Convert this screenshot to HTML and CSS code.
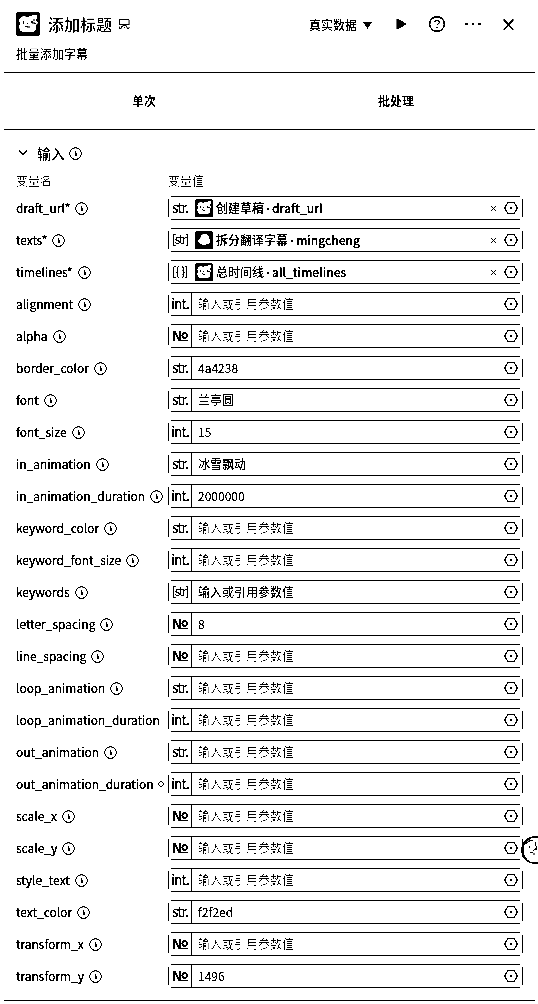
FILE: index.html
```html
<!DOCTYPE html>
<html lang="zh-CN">
<head>
<meta charset="utf-8">
<title>添加标题</title>
<link rel="stylesheet" href="styles.css">
</head>
<body>
<svg class="defs" width="0" height="0">
  <symbol id="info" viewBox="0 0 13 13"><circle cx="6.5" cy="6.5" r="5.8" fill="none" stroke="#000" stroke-width="1.1"/><path d="M6 4h1v5H6zM7 6h1v3H7z" fill="#000"/></symbol>
  <symbol id="hex" viewBox="0 0 14 14"><path d="M3.8 1.5h6.4L13.3 7l-3.1 5.500H3.800L.7 7z" fill="none" stroke="#000" stroke-width="1.200" stroke-linejoin="round"/><rect x="6" y="6" width="2" height="2"/></symbol>
  <symbol id="clear" viewBox="0 0 7 7"><path d="M.5.5l6 6M6.500.500l-6 6" stroke="#000" stroke-width=".9"/></symbol>
  <symbol id="cat" viewBox="0 0 24 24"><rect width="24" height="24" rx="2"/><path d="M5 5l3-1 3 1 7-2h3v3l-1 2 2 3-2 2v5l-3 2H8l-4-1-1-5 1-2-1-4z" fill="#fff"/><path d="M7.500 9v3M11.500 11v1M9 14l2 1h3M16 9v2h3l1 1M17 8h2" fill="none" stroke="#000" stroke-width="1.100"/></symbol>
  <symbol id="ghost" viewBox="0 0 24 24"><rect width="24" height="24" rx="2"/><path d="M8 6l3-2h4l4 4v3l2 2-2 4h-3l-2 2h-4l-2-2-3-1-1-3 3-3z" fill="#fff"/></symbol>
</svg>
<div class="panel">
  <header class="header">
    <div class="title-row">
      <svg class="logo"><use href="#cat"/></svg>
      <h1 class="title">添加标题</h1>
      <svg class="badge" viewBox="0 0 11 11"><path d="M.5 6v-5.500h9.500v5.500M1 5.500h9M3.500 6.500h4M.500 7.500v2h2M2.500 9V7.500h1.500l1 1h1l1-1h1v2h2v-2" fill="none" stroke="#000"/></svg>
      <div class="tools">
        <span class="mode">真实数据</span>
        <svg class="caret" viewBox="0 0 9 7"><path d="M0 0h9L4.500 7z"/></svg>
        <svg class="play" viewBox="0 0 11 12"><path d="M.500 0L11 6 .500 12z"/></svg>
        <svg class="help" viewBox="0 0 16 16"><circle cx="8" cy="8" r="7.300" fill="none" stroke="#000" stroke-width="1.400"/><path d="M5.700 6.500q0-2 2.300-2t2.300 2q0 1-2.300 2.300v1M8 11v1.500" fill="none" stroke="#000" stroke-width="1.300"/></svg>
        <svg class="more" viewBox="0 0 16 4"><circle cx="1.600" cy="2" r="1.400"/><circle cx="8" cy="2" r="1.400"/><circle cx="14.400" cy="2" r="1.400"/></svg>
        <svg class="close" viewBox="0 0 11 11"><path d="M.500.500l10 10M10.500.500l-10 10" stroke="#000" stroke-width="1.500"/></svg>
      </div>
    </div>
    <p class="subtitle">批量添加字幕</p>
  </header>
  <nav class="tabs"><span>单次</span><span>批处理</span></nav>
  <main class="inputs">
    <div class="section">
      <svg class="chevron" viewBox="0 0 10 6"><path d="M.800.500L5 4.700 9.200.500" fill="none" stroke="#000" stroke-width="1.700"/></svg>
      <h2>输入</h2><svg class="info"><use href="#info"/></svg>
    </div>
    <div class="columns"><span>变量名</span><span>变量值</span></div>
    <div class="rows">
      <div class="row"><div class="name">draft_url*<svg class="info"><use href="#info"/></svg></div><div class="field ref"><span class="type">str.</span><svg class="avatar"><use href="#cat"/></svg><span class="value">创建草稿<i>·</i><b>draft_url</b></span><svg class="clear"><use href="#clear"/></svg><svg class="hex"><use href="#hex"/></svg></div></div>
      <div class="row"><div class="name">texts*<svg class="info"><use href="#info"/></svg></div><div class="field ref"><span class="type narrow">[str]</span><svg class="avatar"><use href="#ghost"/></svg><span class="value">拆分翻译字幕<i>·</i><b>mingcheng</b></span><svg class="clear"><use href="#clear"/></svg><svg class="hex"><use href="#hex"/></svg></div></div>
      <div class="row"><div class="name">timelines*<svg class="info"><use href="#info"/></svg></div><div class="field ref"><span class="type object">[{ }]</span><svg class="avatar"><use href="#cat"/></svg><span class="value">总时间线<i>·</i><b>all_timelines</b></span><svg class="clear"><use href="#clear"/></svg><svg class="hex"><use href="#hex"/></svg></div></div>
      <div class="row"><div class="name">alignment<svg class="info"><use href="#info"/></svg></div><div class="field"><span class="type">int.</span><span class="value hint">输入或引用参数值</span><svg class="hex"><use href="#hex"/></svg></div></div>
      <div class="row"><div class="name">alpha<svg class="info"><use href="#info"/></svg></div><div class="field"><span class="type num">N<u>o</u></span><span class="value hint">输入或引用参数值</span><svg class="hex"><use href="#hex"/></svg></div></div>
      <div class="row"><div class="name">border_color<svg class="info"><use href="#info"/></svg></div><div class="field"><span class="type">str.</span><span class="value">4a4238</span><svg class="hex"><use href="#hex"/></svg></div></div>
      <div class="row"><div class="name">font<svg class="info"><use href="#info"/></svg></div><div class="field"><span class="type">str.</span><span class="value">兰亭圆</span><svg class="hex"><use href="#hex"/></svg></div></div>
      <div class="row"><div class="name">font_size<svg class="info"><use href="#info"/></svg></div><div class="field"><span class="type">int.</span><span class="value">15</span><svg class="hex"><use href="#hex"/></svg></div></div>
      <div class="row"><div class="name">in_animation<svg class="info"><use href="#info"/></svg></div><div class="field"><span class="type">str.</span><span class="value">冰雪飘动</span><svg class="hex"><use href="#hex"/></svg></div></div>
      <div class="row"><div class="name">in_animation_duration<svg class="info"><use href="#info"/></svg></div><div class="field"><span class="type">int.</span><span class="value">2000000</span><svg class="hex"><use href="#hex"/></svg></div></div>
      <div class="row"><div class="name">keyword_color<svg class="info"><use href="#info"/></svg></div><div class="field"><span class="type">str.</span><span class="value hint">输入或引用参数值</span><svg class="hex"><use href="#hex"/></svg></div></div>
      <div class="row"><div class="name">keyword_font_size<svg class="info"><use href="#info"/></svg></div><div class="field"><span class="type">int.</span><span class="value hint">输入或引用参数值</span><svg class="hex"><use href="#hex"/></svg></div></div>
      <div class="row"><div class="name">keywords<svg class="info"><use href="#info"/></svg></div><div class="field"><span class="type narrow">[str]</span><span class="value">输入或引用参数值</span><svg class="hex"><use href="#hex"/></svg></div></div>
      <div class="row"><div class="name">letter_spacing<svg class="info"><use href="#info"/></svg></div><div class="field"><span class="type num">N<u>o</u></span><span class="value">8</span><svg class="hex"><use href="#hex"/></svg></div></div>
      <div class="row"><div class="name">line_spacing<svg class="info"><use href="#info"/></svg></div><div class="field"><span class="type num">N<u>o</u></span><span class="value hint">输入或引用参数值</span><svg class="hex"><use href="#hex"/></svg></div></div>
      <div class="row"><div class="name">loop_animation<svg class="info"><use href="#info"/></svg></div><div class="field"><span class="type">str.</span><span class="value hint">输入或引用参数值</span><svg class="hex"><use href="#hex"/></svg></div></div>
      <div class="row"><div class="name">loop_animation_duration</div><div class="field"><span class="type">int.</span><span class="value hint">输入或引用参数值</span><svg class="hex"><use href="#hex"/></svg></div></div>
      <div class="row"><div class="name">out_animation<svg class="info"><use href="#info"/></svg></div><div class="field"><span class="type">str.</span><span class="value hint">输入或引用参数值</span><svg class="hex"><use href="#hex"/></svg></div></div>
      <div class="row"><div class="name">out_animation_duration<svg class="info tiny" viewBox="0 0 6 6"><circle cx="3" cy="3" r="2.300" fill="none" stroke="#000"/></svg></div><div class="field"><span class="type">int.</span><span class="value hint">输入或引用参数值</span><svg class="hex"><use href="#hex"/></svg></div></div>
      <div class="row"><div class="name">scale_x<svg class="info"><use href="#info"/></svg></div><div class="field"><span class="type num">N<u>o</u></span><span class="value hint">输入或引用参数值</span><svg class="hex"><use href="#hex"/></svg></div></div>
      <div class="row"><div class="name">scale_y<svg class="info"><use href="#info"/></svg></div><div class="field"><span class="type num">N<u>o</u></span><span class="value hint">输入或引用参数值</span><svg class="hex"><use href="#hex"/></svg></div></div>
      <div class="row"><div class="name">style_text<svg class="info"><use href="#info"/></svg></div><div class="field"><span class="type">int.</span><span class="value hint">输入或引用参数值</span><svg class="hex"><use href="#hex"/></svg></div></div>
      <div class="row"><div class="name">text_color<svg class="info"><use href="#info"/></svg></div><div class="field"><span class="type">str.</span><span class="value">f2f2ed</span><svg class="hex"><use href="#hex"/></svg></div></div>
      <div class="row"><div class="name">transform_x<svg class="info"><use href="#info"/></svg></div><div class="field"><span class="type num">N<u>o</u></span><span class="value hint">输入或引用参数值</span><svg class="hex"><use href="#hex"/></svg></div></div>
      <div class="row"><div class="name">transform_y<svg class="info"><use href="#info"/></svg></div><div class="field"><span class="type num">N<u>o</u></span><span class="value">1496</span><svg class="hex"><use href="#hex"/></svg></div></div>
    </div>
  </main>
</div>
<svg class="assistant" viewBox="0 0 28 28"><circle cx="14" cy="14" r="13" fill="#fff" stroke="#000" stroke-width="1.500"/><path d="M10 2A13 13 0 0 0 5 23" fill="none" stroke="#000" stroke-width="2"/><path d="M5 8q3-4 7-4M8.500 10v2M14.500 6v4M9 17l3-1M12 15l3-3M12 18h2M15.500 10v4" fill="none" stroke="#000" stroke-width="1.200"/></svg>
</body>
</html>
```

FILE: styles.css
```css
* { box-sizing: border-box; }
html { background: #fff; }
body {
  margin: 0;
  width: 538px;
  height: 1004px;
  overflow: hidden;
  position: relative;
  background: #fff;
  color: #000;
  font: 12px/16px "Noto Sans CJK SC", sans-serif;
  filter: grayscale(1) contrast(40);
}
h1, h2, p { margin: 0; }
svg { display: block; flex: none; }
.defs { position: absolute; }
.panel { margin: 0 3px 0 4px; height: 1001px; border-bottom: 1px solid #000; }
.header { height: 73px; padding: 12px 21px 0 12px; border-bottom: 1px solid #000; }
.title-row { display: flex; align-items: center; height: 24px; }
.logo { width: 24px; height: 24px; box-shadow: -23px 5px 0 -23px #000; }
.title { margin-left: 8px; font-size: 16px; line-height: 24px; font-weight: 500; }
.badge { width: 11px; height: 11px; margin-left: 7px; }
.tools { display: flex; align-items: center; margin-left: auto; }
.mode { font-weight: 500; padding-top: 2px; }
.caret { width: 9px; height: 7px; margin: 2px 0 0 6px; }
.play { width: 11px; height: 12px; margin-left: 24px; }
.help { width: 16px; height: 16px; margin-left: 22px; }
.more { width: 16px; height: 4px; margin-left: 20px; }
.close { width: 11px; height: 11px; margin-left: 22px; }
.subtitle { margin-top: 10px; -webkit-text-stroke: .1px #000; }
.tabs { display: grid; grid-template-columns: 252px 252px; height: 57px; padding-left: 14px; border-bottom: 1px solid #000; align-items: center; text-align: center; font-weight: 700; }
.inputs { padding: 13px 12px 0; }
.section { display: flex; align-items: center; height: 20px; padding-left: 2px; }
.section h2 { margin-left: 9px; font-size: 14px; line-height: 20px; font-weight: 500; }
.chevron { width: 10px; height: 6px; }
.info { width: 13px; height: 13px; margin-left: 5px; }
.info.tiny { width: 6px; height: 6px; margin-left: 4px; }
.columns { display: grid; grid-template-columns: 152px 1fr; height: 33px; padding-top: 10px; color: #505050; }
.rows { display: grid; gap: 8px; }
.row { display: grid; grid-template-columns: 152px 355px; height: 24px; }
.name { display: flex; align-items: center; white-space: nowrap; -webkit-text-stroke: .25px #000; letter-spacing: -.02px; }
.field { display: flex; align-items: center; border: 1px solid #606060; border-radius: 4px; padding-right: 4px; }
.type { width: 23px; height: 22px; border-right: 1px solid #000; font-size: 14px; line-height: 20px; text-align: center; white-space: nowrap; letter-spacing: -1px; -webkit-text-stroke: .2px #000; }
.narrow { font-size: 12px; letter-spacing: -1.3px; }
.object { font-size: 12px; letter-spacing: -.7px; }
.num { font-size: 13px; font-weight: 700; line-height: 21px; }
.num u { font-size: 12px; text-underline-offset: 1px; position: relative; top: -2px; }
.ref .type { border-right: 1px dotted #909090; }
.section .info { margin-left: 4px; }
.avatar { width: 18px; height: 18px; margin-left: 3px; }
.value { flex: 1; padding-left: 6px; white-space: nowrap; -webkit-text-stroke: .1px #000; }
.ref .value { padding-left: 3px; font-weight: 500; }
.value i { display: inline-block; width: 8px; text-align: center; font: 700 12px/12px "Open Sans", sans-serif; }
.value b { font-weight: 500; -webkit-text-stroke: .25px #000; }
.value.hint { color: #535353; -webkit-text-stroke: .1px #535353; }
.clear { width: 7px; height: 7px; margin-right: 7px; }
.hex { width: 14px; height: 14px; }
.assistant { position: absolute; left: 521px; top: 836px; width: 28px; height: 28px; }
```
